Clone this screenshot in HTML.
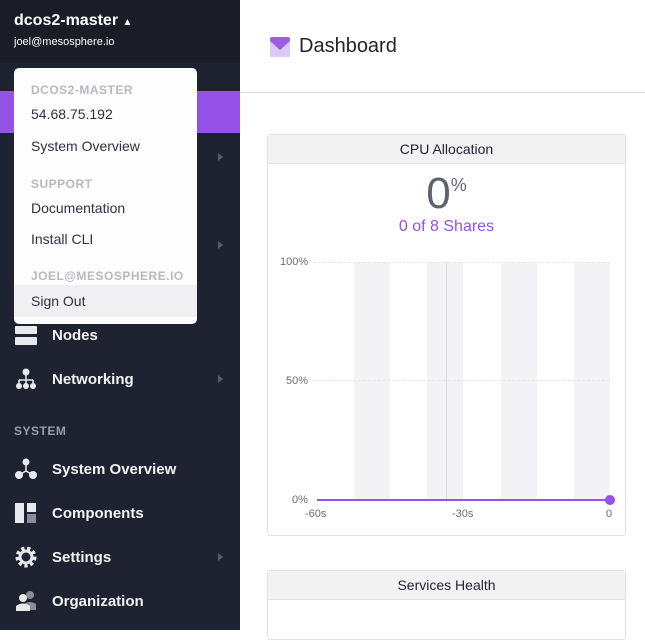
<!DOCTYPE html>
<html><head><style>
*{margin:0;padding:0;box-sizing:border-box}
body{width:645px;height:630px;overflow:hidden;font-family:"Liberation Sans",sans-serif;background:#fff;position:relative}
.sb{position:absolute;left:0;top:0;width:240px;height:630px;background:#1f2230}
.sbh{position:absolute;left:0;top:0;width:240px;height:63px;background:#1a1d28}
.abs{position:absolute}
.nav{position:absolute;left:52px;color:#f2f2f4;font-size:15px;font-weight:bold}
.arr{position:absolute;left:218px;width:0;height:0;border-left:5px solid #555a68;border-top:4px solid transparent;border-bottom:4px solid transparent}
.dd{position:absolute;left:14px;top:68px;width:183px;height:256px;background:#fdfdfe;border-radius:5px;overflow:hidden}
.dd .h{position:absolute;left:17px;color:#b8b9c0;font-size:12px;font-weight:bold;letter-spacing:.5px}
.dd .i{position:absolute;left:17px;color:#2e3140;font-size:14px}
.ic{position:absolute;left:15px;background:#e8e9ed}
</style></head><body>
<div class="sb"></div><div class="sbh"></div>
<div class="abs" style="left:14px;top:12px;color:#fff;font-size:16px;font-weight:bold">dcos2-master <span style="font-size:10px">▲</span></div>
<div class="abs" style="left:14px;top:36px;color:#fff;font-size:11px">joel@mesosphere.io</div>
<div class="abs" style="left:0;top:91px;width:240px;height:42px;background:#9351e5"></div>
<div class="arr" style="top:153px"></div>
<div class="arr" style="top:241px"></div>
<div class="ic" style="top:326px;width:22px;height:8px;border-radius:1px"></div>
<div class="ic" style="top:337px;width:22px;height:8px;border-radius:1px"></div>
<div class="nav" style="top:327px">Nodes</div>
<svg class="abs" style="left:15px;top:368px" width="22" height="22"><circle cx="11" cy="4" r="3.5" fill="#e8e9ed"/><path d="M11 7v5M4 12h14M4 12v4M11 12v4M18 12v4" stroke="#e8e9ed" stroke-width="1.5" fill="none"/><circle cx="4" cy="18" r="3" fill="#e8e9ed"/><circle cx="11" cy="18" r="3" fill="#e8e9ed"/><circle cx="18" cy="18" r="3" fill="#e8e9ed"/></svg>
<div class="nav" style="top:371px">Networking</div>
<div class="arr" style="top:375px"></div>
<div class="abs" style="left:14px;top:424px;color:#9a9caa;font-size:12px;font-weight:bold;letter-spacing:.5px">SYSTEM</div>
<svg class="abs" style="left:15px;top:458px" width="22" height="22"><circle cx="11" cy="4" r="3.5" fill="#e8e9ed"/><path d="M11 7v6L4 17M11 13l7 4" stroke="#e8e9ed" stroke-width="1.5" fill="none"/><circle cx="4" cy="17" r="4" fill="#e8e9ed"/><circle cx="18" cy="17" r="4" fill="#e8e9ed"/></svg>
<div class="nav" style="top:461px">System Overview</div>
<div class="ic" style="top:503px;width:9px;height:20px"></div>
<div class="ic" style="left:27px;top:503px;width:9px;height:9px"></div>
<div class="ic" style="left:27px;top:514px;width:9px;height:9px;background:#8a8d98"></div>
<div class="nav" style="top:505px">Components</div>
<svg class="abs" style="left:15px;top:546px" width="22" height="22"><circle cx="11" cy="11" r="8" fill="none" stroke="#e8e9ed" stroke-width="5" stroke-dasharray="3 2.5"/><circle cx="11" cy="11" r="6" fill="none" stroke="#e8e9ed" stroke-width="3"/></svg>
<div class="nav" style="top:549px">Settings</div>
<div class="arr" style="top:553px"></div>
<svg class="abs" style="left:15px;top:590px" width="22" height="22"><circle cx="15" cy="5" r="4" fill="#8a8d98"/><path d="M9 20v-6q6-4 12 0v6z" fill="#8a8d98"/><circle cx="8" cy="8" r="4" fill="#e8e9ed"/><path d="M1 21v-5q7-5 14 0v5z" fill="#e8e9ed"/></svg>
<div class="nav" style="top:593px">Organization</div>

<div class="dd">
<div class="abs" style="left:0;top:217px;width:183px;height:32px;background:#f0f0f2"></div>
<div class="h" style="top:15px">DCOS2-MASTER</div>
<div class="i" style="top:38px">54.68.75.192</div>
<div class="i" style="top:70px">System Overview</div>
<div class="h" style="top:109px">SUPPORT</div>
<div class="i" style="top:132px">Documentation</div>
<div class="i" style="top:163px">Install CLI</div>
<div class="h" style="top:201px">JOEL@MESOSPHERE.IO</div>
<div class="i" style="top:225px">Sign Out</div>
</div>

<svg class="abs" style="left:270px;top:37px" width="20" height="20"><rect width="20" height="20" rx="2" fill="#dcc9f8"/><path d="M0 2q0-2 2-2h16q2 0 2 2v2L10 13 0 4z" fill="#9c5ee8"/></svg>
<div class="abs" style="left:299px;top:35px;color:#1f2230;font-size:20px">Dashboard</div>
<div class="abs" style="left:240px;top:92px;width:405px;height:1px;background:#dcdcde"></div>

<div class="abs" style="left:267px;top:134px;width:359px;height:402px;border:1px solid #e2e2e4;border-radius:3px"></div>
<div class="abs" style="left:268px;top:135px;width:357px;height:29px;background:#f2f2f3;border-bottom:1px solid #e2e2e4"></div>
<div class="abs" style="left:268px;top:141px;width:357px;text-align:center;color:#1f2230;font-size:14px">CPU Allocation</div>
<div class="abs" style="left:268px;top:170px;width:357px;text-align:center;color:#5f6170;font-size:44px;line-height:48px">0<span style="font-size:18px;vertical-align:top;line-height:30px">%</span></div>
<div class="abs" style="left:268px;top:218px;width:357px;text-align:center;color:#9351e5;font-size:16px">0 of 8 Shares</div>
<div class="abs" style="left:354px;top:262px;width:36px;height:238px;background:#f3f3f5"></div>
<div class="abs" style="left:427px;top:262px;width:36px;height:238px;background:#f3f3f5"></div>
<div class="abs" style="left:501px;top:262px;width:36px;height:238px;background:#f3f3f5"></div>
<div class="abs" style="left:574px;top:262px;width:36px;height:238px;background:#f3f3f5"></div>
<div class="abs" style="left:313px;top:262px;width:297px;border-top:1px dashed #e6e6e8"></div>
<div class="abs" style="left:313px;top:380px;width:297px;border-top:1px dashed #e6e6e8"></div>
<div class="abs" style="left:446px;top:262px;width:1px;height:238px;background:#d8d8dc"></div>
<div class="abs" style="left:317px;top:499px;width:293px;height:2px;background:#9351e5"></div>
<div class="abs" style="left:605px;top:495px;width:10px;height:10px;border-radius:50%;background:#9351e5"></div>
<div class="abs" style="left:280px;top:256px;color:#6a6c78;font-size:11px">100%</div>
<div class="abs" style="left:286px;top:375px;color:#6a6c78;font-size:11px">50%</div>
<div class="abs" style="left:292px;top:494px;color:#6a6c78;font-size:11px">0%</div>
<div class="abs" style="left:305px;top:508px;color:#6a6c78;font-size:11px">-60s</div>
<div class="abs" style="left:452px;top:508px;color:#6a6c78;font-size:11px">-30s</div>
<div class="abs" style="left:606px;top:508px;color:#6a6c78;font-size:11px">0</div>

<div class="abs" style="left:267px;top:570px;width:359px;height:70px;border:1px solid #e2e2e4;border-radius:3px"></div>
<div class="abs" style="left:268px;top:571px;width:357px;height:29px;background:#f2f2f3;border-bottom:1px solid #e2e2e4"></div>
<div class="abs" style="left:268px;top:577px;width:357px;text-align:center;color:#1f2230;font-size:14px">Services Health</div>
</body></html>
